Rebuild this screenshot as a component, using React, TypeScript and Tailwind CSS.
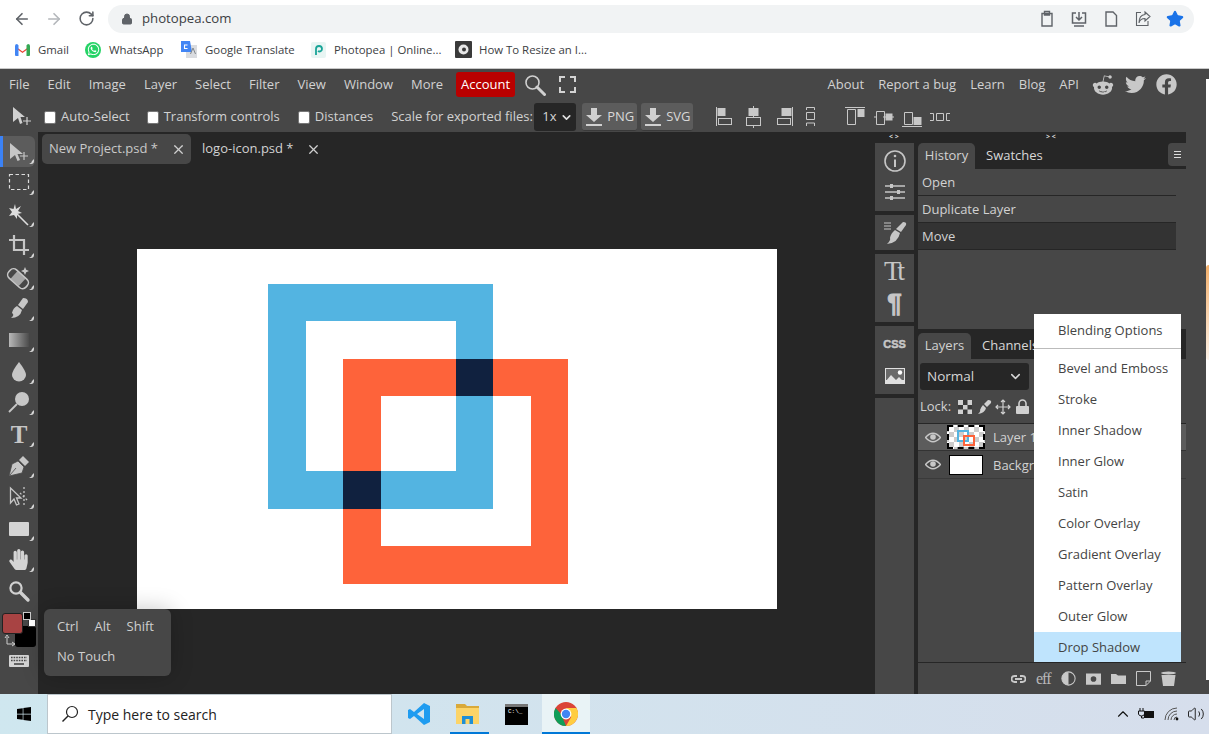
import React from "react";
import { ArrowLeft, ArrowRight, RotateCw, Lock, Star, X, ChevronDown, ChevronUp, Volume2 } from "lucide-react";
import { FaRedditAlien, FaTwitter, FaFacebook, FaWindows, FaHandPaper, FaWhatsapp } from "react-icons/fa";

const C = "#c6c6c6";

function Marker() {
  return <path d="M34 23 v2 q0 3 -3 3 h-2 q3 -1 3 -3 z" fill="#d8d8d8" />;
}

function Tool({ children, active, marker = true }: { children: React.ReactNode; active?: boolean; marker?: boolean }) {
  return (
    <div className={"h-[31.4px] w-[35px] " + (active ? "bg-[#5c5c5c] rounded-r-md border-l-[3px] border-[#3b82f6]" : "")}>
      <svg width="38" height="31" viewBox="0 0 38 31" className={active ? "-ml-[3px]" : ""}>
        {children}
        {marker && <Marker />}
      </svg>
    </div>
  );
}

function LeftTools() {
  return (
    <div className="w-[38px] bg-[#474747] pt-1 flex flex-col shrink-0">
      <Tool active>
        <path d="M10 7 L23 18 H17.5 L20 24 L17.5 25 L15 19 L10 23 Z" fill={C} />
        <path d="M24 16 V24 M20 20 H28" stroke={C} strokeWidth="1.2" />
      </Tool>
      <Tool>
        <rect x="9.5" y="7.5" width="19" height="15" fill="none" stroke="#ddd" strokeWidth="1.2" strokeDasharray="3.5 2.5" />
      </Tool>
      <Tool>
        <path d="M15 5 L16 10 L21 7 L18 12 L22 14 L17 15 L17 20 L14 16 L9 17 L12 13 L9 9 L13.5 10 Z" fill="#ddd" />
        <path d="M17 15 L28 26" stroke="#ddd" strokeWidth="1.6" />
      </Tool>
      <Tool>
        <path d="M14 5 V20 H29 M9 10 H24 V25" fill="none" stroke={C} strokeWidth="2.2" />
      </Tool>
      <Tool>
        <g transform="rotate(42 18 16)">
          <rect x="7" y="11" width="23" height="11" rx="4.5" fill="none" stroke={C} strokeWidth="1.6" />
          <rect x="13" y="11.5" width="11" height="10" fill={C} opacity="0.75" />
        </g>
        <path d="M25 5 l1.2 2.8 l2.8 1.2 l-2.8 1.2 l-1.2 2.8 l-1.2 -2.8 l-2.8 -1.2 l2.8 -1.2 z" fill={C} />
      </Tool>
      <Tool>
        <path d="M23 5 Q28 5 28 9 L23 16 L18 12 Z" fill={C} />
        <path d="M17 13 L22 17 Q20 25 11 25 Q15 22 12 20 Q13 15 17 13 Z" fill={C} />
      </Tool>
      <Tool>
        <defs>
          <linearGradient id="g1" x1="0" x2="1" y1="0" y2="0">
            <stop offset="0" stopColor="#b8b8b8" />
            <stop offset="1" stopColor="#4c4c4c" />
          </linearGradient>
        </defs>
        <rect x="9" y="9" width="20" height="14" fill="url(#g1)" />
      </Tool>
      <Tool>
        <path d="M19 6 Q26 15 26 19 A7 6.5 0 0 1 12 19 Q12 15 19 6 Z" fill={C} />
      </Tool>
      <Tool>
        <circle cx="22" cy="12" r="7" fill={C} />
        <path d="M17 17 L9 25" stroke={C} strokeWidth="1.8" />
      </Tool>
      <Tool>
        <text x="19" y="24" textAnchor="middle" fontFamily="'Liberation Serif', serif" fontWeight="700" fontSize="25" fill={C}>T</text>
      </Tool>
      <Tool>
        <path d="M23 6 L29 12 L25 16 L19 10 Z" fill={C} />
        <path d="M18 11 L24 17 L22 23 L9 26 L12 14 Z M10 25 L16 18" fill={C} stroke="#474747" strokeWidth="0.8" />
      </Tool>
      <Tool>
        <path d="M10.5 7 L21 17 H16.5 L19 23 L16.5 24 L14 18 L10.5 22 Z" fill="none" stroke={C} strokeWidth="1.3" />
        <path d="M24 6 L24 24 M20 12 L28 20" stroke={C} strokeWidth="1.3" strokeDasharray="2 2" />
      </Tool>
      <Tool>
        <rect x="9" y="9" width="20" height="14" rx="1" fill="#d4d4d4" />
      </Tool>
      <Tool>
        <foreignObject x="8" y="5" width="22" height="22">
          <FaHandPaper size={21} color="#d4d4d4" />
        </foreignObject>
      </Tool>
      <Tool marker={false}>
        <circle cx="16" cy="13" r="5.6" fill="none" stroke="#d0d0d0" strokeWidth="2.2" />
        <path d="M20.5 17.5 L28 25" stroke="#d0d0d0" strokeWidth="3.4" strokeLinecap="round" />
      </Tool>
      <div className="relative h-[44px] mt-[1px] w-[38px]">
        <div className="absolute left-[15px] top-[18px] w-[21px] h-[21px] bg-black rounded-[3px]" />
        <div className="absolute left-[28px] top-[11px] w-[8px] h-[8px] bg-white border border-[#333]" />
        <div className="absolute left-[23px] top-[4px] w-[8px] h-[8px] bg-black border border-[#ccc]" />
        <div className="absolute left-[2px] top-[5px] w-[21px] h-[21px] bg-[#a84343] border border-[#222] rounded-[3px]" />
        <svg className="absolute left-[4px] top-[26px]" width="12" height="13" viewBox="0 0 12 13">
          <path d="M3 3 V10 H10 M1 4 L3 1 L5 4 M8 8 L11 10 L8 12" fill="none" stroke="#ccc" strokeWidth="1" />
        </svg>
      </div>
      <div className="ml-[9px] mt-[3px]">
        <svg width="20" height="12" viewBox="0 0 20 12">
          <rect width="20" height="12" rx="1" fill="#d4d4d4" />
          <path d="M2 2.5 H18 M2 5.5 H18" stroke="#474747" strokeWidth="1.4" strokeDasharray="1.6 1" />
          <path d="M5 9 H15" stroke="#474747" strokeWidth="1.6" />
        </svg>
      </div>
    </div>
  );
}

function Tab({ label, active }: { label: string; active?: boolean }) {
  return (
    <div className={"h-[30px] flex items-center rounded-[5px] text-[13px] " + (active ? "bg-[#474747] text-[#c9c9c9] w-[149px] pl-[7px]" : "text-[#d2d2d2] w-[135px] pl-[11px]")}>
      <span className="whitespace-nowrap -mt-[1px]">{label}</span>
      <X size={15} className="ml-auto mr-[5px]" color="#cfcfcf" strokeWidth={2} />
    </div>
  );
}

function Canvas() {
  return (
    <div className="flex-1 bg-[#262626] flex flex-col min-w-0">
      <div className="flex pl-[4px] pt-[2px] h-[33px]">
        <Tab label="New Project.psd *" active />
        <Tab label="logo-icon.psd *" />
      </div>
      <div className="ml-[99px] mt-[84px] w-[640px] h-[360px] bg-white">
        <svg width="640" height="360" viewBox="0 0 640 360">
          <path fillRule="evenodd" d="M131 35 H356 V260 H131 Z M169 72 V222 H319 V72 Z" fill="#53b4e1" />
          <path fillRule="evenodd" d="M206 110 H431 V335 H206 Z M244 147 V297 H394 V147 Z" fill="#fe633a" />
          <rect x="319" y="110" width="37" height="37" fill="#10213f" />
          <rect x="206" y="222" width="38" height="38" fill="#10213f" />
        </svg>
      </div>
    </div>
  );
}

function SideGroup({ h, children, grow }: { h?: string; children?: React.ReactNode; grow?: boolean }) {
  return <div className={"w-[39px] bg-[#474747] flex flex-col items-center " + (grow ? "flex-1 " : "") + (h || "")}>{children}</div>;
}

function SideIcons() {
  return (
    <div className="w-[43px] shrink-0 bg-[#262626] flex flex-col gap-[4px] relative">
      <div className="h-[11px] -mb-[4px] pl-[14px] text-[7px] leading-[10px] font-bold text-[#ddd]">&lt; &gt;</div>
      <SideGroup h="h-[68px]">
        <svg width="24" height="24" viewBox="0 0 24 24" className="mt-[6px]">
          <circle cx="12" cy="12" r="10" fill="none" stroke={C} strokeWidth="1.6" />
          <path d="M12 10.5 V18" stroke={C} strokeWidth="2" />
          <circle cx="12" cy="7" r="1.3" fill={C} />
        </svg>
        <svg width="22" height="18" viewBox="0 0 22 18" className="mt-[10px]">
          <path d="M1 3 H21 M1 9 H21 M1 15 H21" stroke={C} strokeWidth="1.3" />
          <path d="M6 1 H9 V5 H6 Z M13 7 H16 V11 H13 Z M6 13 H9 V17 H6 Z" fill={C} />
        </svg>
      </SideGroup>
      <SideGroup h="h-[35px]">
        <svg width="24" height="24" viewBox="0 0 24 24" className="mt-[6px]">
          <path d="M1 2 H8 M1 5 H8 M1 8 H8" stroke={C} strokeWidth="1.1" />
          <path d="M20 1 Q24 1 23 4 L18 11 L13 8 Z" fill={C} />
          <path d="M12 9 L17 12 Q15 22 4 23 Q8 19 7 17 Q8 12 12 9 Z" fill={C} />
        </svg>
      </SideGroup>
      <SideGroup h="h-[68px]">
        <span className="text-[28px] leading-[30px] mt-[2px] font-['Liberation_Serif',serif] text-[#c6c6c6] tracking-[-4px] pr-[4px]">Tt</span>
        <span className="text-[26px] leading-[28px] mt-[3px] font-bold font-['Liberation_Sans',sans-serif] text-[#c6c6c6] [-webkit-text-stroke:1px_#c6c6c6]">¶</span>
      </SideGroup>
      <SideGroup h="h-[68px]">
        <span className="text-[11px] leading-[12px] mt-[12px] font-black font-['Liberation_Sans',sans-serif] text-[#c6c6c6] [-webkit-text-stroke:0.5px_#c6c6c6]">CSS</span>
        <svg width="20" height="16" viewBox="0 0 20 16" className="mt-[18px]">
          <rect width="20" height="16" fill="#e0e0e0" />
          <rect x="1" y="1" width="18" height="11" fill="#6a6a6a" />
          <path d="M1 15 V13 L6 7 L11 12 L14 9 L19 14 V15 Z" fill="#e0e0e0" />
          <circle cx="15" cy="4.5" r="2.2" fill="#fff" />
        </svg>
      </SideGroup>
      <SideGroup grow />
    </div>
  );
}

function HistoryRow({ label, active }: { label: string; active?: boolean }) {
  return (
    <div className={"h-[27px] w-[258px] border-b border-[#262626] pl-[4px] pt-[1px] flex items-center text-[13px] text-[#d2d2d2] " + (active ? "bg-[#333333]" : "")}>
      {label}
    </div>
  );
}

function Panels() {
  return (
    <div className="w-[291px] shrink-0 bg-[#474747] flex flex-col relative">
      <div className="h-[37px] w-[268px] bg-[#262626] relative flex items-end shrink-0">
        <div className="absolute left-[128px] top-0 text-[7px] leading-[10px] font-bold text-[#ddd]">&gt; &lt;</div>
        <div className="h-[26px] w-[57px] bg-[#474747] rounded-t-[5px] text-[13px] text-[#d2d2d2] flex items-center justify-center">History</div>
        <div className="h-[26px] pl-[11px] text-[13px] text-[#d8d8d8] flex items-center">Swatches</div>
        <div className="absolute right-0 top-[11px] w-[18px] h-[23px] bg-[#474747] rounded-l-[4px] flex flex-col justify-center items-center gap-[2px]">
          <div className="w-[7px] h-[1px] bg-[#ddd]" />
          <div className="w-[7px] h-[1px] bg-[#ddd]" />
          <div className="w-[7px] h-[1px] bg-[#ddd]" />
        </div>
      </div>
      <div className="h-[160px] shrink-0">
        <HistoryRow label="Open" />
        <HistoryRow label="Duplicate Layer" />
        <HistoryRow label="Move" active />
      </div>
      <div className="h-[30px] w-[268px] bg-[#262626] flex items-end shrink-0">
        <div className="h-[26px] w-[53px] bg-[#474747] rounded-t-[5px] text-[13px] text-[#d2d2d2] flex items-center justify-center">Layers</div>
        <div className="h-[26px] pl-[11px] text-[13px] text-[#d8d8d8] flex items-center">Channels</div>
      </div>
      <div className="pl-[2px] pt-[4px]">
        <div className="w-[109px] h-[27px] bg-[#262626] rounded-[3px] pl-[7px] pr-[6px] flex items-center justify-between text-[13.5px] text-[#d6d6d6]">
          Normal
          <ChevronDown size={15} strokeWidth={2.4} color="#d6d6d6" />
        </div>
      </div>
      <div className="h-[33px] flex items-center pl-[2px] text-[13px] text-[#d2d2d2] shrink-0">
        <span className="w-[38px]">Lock:</span>
        <svg width="72" height="16" viewBox="0 0 72 16">
          <rect x="0" y="1" width="14" height="14" fill="#d0d0d0" />
          <path d="M5 1 H9.5 V6 H5 Z M0 6 H5 V10.5 H0 Z M9.5 6 H14 V10.5 H9.5 Z M5 10.5 H9.5 V15 H5 Z" fill="#3a3a3a" />
          <path d="M30 1 Q34 1 33 4 L29 8 L26 5 Z M25 6 L28 9 Q27 14 20 15 Q23 12 22 11 Q23 8 25 6 Z" fill="#d0d0d0" />
          <path d="M45 1 V15 M38 8 H52 M43 3 L45 1 L47 3 M43 13 L45 15 L47 13 M40 6 L38 8 L40 10 M50 6 L52 8 L50 10" fill="none" stroke="#d0d0d0" strokeWidth="1.2" />
          <rect x="58" y="7" width="13" height="8" rx="1" fill="#d0d0d0" />
          <path d="M61 7 V4.5 A3.5 3.5 0 0 1 68 4.5 V7" fill="none" stroke="#d0d0d0" strokeWidth="1.6" />
        </svg>
      </div>
      <div className="border-t border-[#262626] w-[268px] shrink-0">
        <div className="h-[27px] bg-[#5c5c5c] flex items-center border-b border-[#333]">
          <Eye />
          <div className="ml-[6px] w-[38px] h-[24px] bg-white border-2 border-dashed border-black relative overflow-hidden [background-image:repeating-conic-gradient(#ccc_0_25%,#fff_0_50%)] [background-size:10px_10px]">
            <div className="absolute left-[8px] top-[3px] w-[12px] h-[12px] border-2 border-[#53b4e1]" />
            <div className="absolute left-[14px] top-[8px] w-[12px] h-[11px] border-2 border-[#fe633a]" />
          </div>
          <span className="ml-[8px] mt-[2px] text-[13px] text-[#d2d2d2]">Layer 1</span>
        </div>
        <div className="h-[28px] flex items-center border-b border-[#3a3a3a]">
          <Eye />
          <div className="ml-[8px] w-[34px] h-[20px] bg-white border border-black" />
          <span className="ml-[10px] mt-[2px] text-[13px] text-[#d2d2d2]">Background</span>
        </div>
      </div>
      <div className="flex-1" />
      <div className="h-[32px] w-[268px] border-t border-[#262626] shrink-0 flex items-center pl-[93px] gap-[10px]">
        <svg width="15" height="10" viewBox="0 0 15 10" className="shrink-0"><path d="M6 2 H3.5 A3 3 0 0 0 3.5 8 H6 M9 2 H11.5 A3 3 0 0 1 11.5 8 H9 M4 5 H11" fill="none" stroke="#c8c8c8" strokeWidth="1.8" /></svg>
        <span className="text-[16px] leading-[16px] text-[#b8b8b8] font-['Liberation_Serif',serif] w-[15px] tracking-[-1px] shrink-0">eff</span>
        <svg width="15" height="17" viewBox="0 0 17 17" className="shrink-0 w-[15px]"><circle cx="8.5" cy="8.5" r="7.5" fill="none" stroke="#c8c8c8" strokeWidth="1.2" /><path d="M8.5 1 A7.5 7.5 0 0 0 8.5 16 Z" fill="#c8c8c8" /></svg>
        <svg width="15" height="12" viewBox="0 0 16 12" className="shrink-0"><path fillRule="evenodd" d="M0 0 H16 V12 H0 Z M8 3 A3 3 0 1 0 8 9 A3 3 0 0 0 8 3 Z" fill="#c8c8c8" /></svg>
        <svg width="15" height="11" viewBox="0 0 15 11" className="shrink-0"><path d="M0 1 H5 L7 2.5 H15 V11 H0 Z" fill="#c8c8c8" /></svg>
        <svg width="15" height="15" viewBox="0 0 15 15" className="shrink-0"><path d="M0.5 0.5 H14.5 V10 L10 14.5 H0.5 Z M14.5 10 H10 V14.5" fill="none" stroke="#c8c8c8" strokeWidth="1" /></svg>
        <svg width="15" height="15" viewBox="0 0 15 15" className="shrink-0"><ellipse cx="7.5" cy="2" rx="7.5" ry="1.5" fill="#c8c8c8" /><path d="M0.5 4 H14.5 L13 15 H2 Z" fill="#c8c8c8" /></svg>
      </div>
    </div>
  );
}

function Eye() {
  return (
    <svg width="16" height="11" viewBox="0 0 16 11" className="ml-[7px] shrink-0">
      <path d="M0.5 5.5 Q8 -3 15.5 5.5 Q8 14 0.5 5.5 Z" fill="none" stroke="#c8c8c8" strokeWidth="1.4" />
      <circle cx="8" cy="5" r="2.8" fill="#c8c8c8" />
    </svg>
  );
}

function LayerStyleMenu() {
  const items = ["Bevel and Emboss", "Stroke", "Inner Shadow", "Inner Glow", "Satin", "Color Overlay", "Gradient Overlay", "Pattern Overlay", "Outer Glow"];
  return (
    <div className="absolute left-[1034px] top-[314px] w-[147px] h-[348px] overflow-hidden bg-white text-[13px] text-[#444] flex flex-col">
      <div className="h-[35px] shrink-0 pl-[24px] pb-[1px] flex items-center border-b border-[#bbb]">Blending Options</div>
      <div className="h-[4px] shrink-0" />
      {items.map((t) => (
        <div key={t} className="h-[31px] shrink-0 pl-[24px] flex items-center whitespace-nowrap">{t}</div>
      ))}
      <div className="h-[31px] shrink-0 pl-[24px] flex items-center bg-[#bfe4fd]">Drop Shadow</div>
    </div>
  );
}

function AlignIcons() {
  const s = "#c8c8c8";
  return (
    <svg width="235" height="26" viewBox="0 0 235 26" className="shrink-0">
      <g fill="none" stroke={s} strokeWidth="1">
        <path d="M0.5 3 V22" />
        <rect x="2" y="4.5" width="7" height="7" fill={s} />
        <rect x="2.5" y="14.5" width="13" height="6" />
        <path d="M37.5 2 V24" />
        <rect x="33" y="4.5" width="9" height="7" fill={s} />
        <rect x="30.5" y="13.5" width="14" height="8" fill="#474747" />
        <path d="M76.5 3 V22" />
        <rect x="66" y="4.5" width="9" height="7" fill={s} />
        <rect x="61.5" y="14.5" width="13" height="6" />
        <path d="M90.5 6 V3.5 H98.5 V6 M90.5 8.5 H98.5 V15.5 H90.5 Z M90.5 22 V19 H98.5 V22" />
        <path d="M129 3.5 H149 M131.5 5.5 H139.5 V20.5 H131.5 Z" />
        <rect x="142" y="5.5" width="6" height="7" fill={s} />
        <path d="M158 13 H161 M167 13 H170 M160.5 7.5 H168.5 V20.5 H160.5 Z" />
        <rect x="170" y="10" width="6" height="6" fill={s} />
        <path d="M176 13 H178" />
        <path d="M186 22.5 H206 M188.5 8.5 H196.5 V20.5 H188.5 Z" />
        <rect x="198" y="13.5" width="7" height="7" fill={s} />
        <path d="M214 9.5 H217.5 V16.5 H214 M220.5 9.5 H227.5 V16.5 H220.5 Z M234 9.5 H230.5 V16.5 H234" />
      </g>
    </svg>
  );
}

function ExportButton({ label }: { label: string }) {
  return (
    <div className="h-[28px] bg-[#5c5c5c] rounded-[3px] border-b border-[#3a3a3a] flex items-center pl-[3px] pr-[2px] gap-[4px] text-[13px] text-[#d8d8d8]">
      <svg width="18" height="20" viewBox="0 0 18 20">
        <path d="M6 1 H12 V8 H17 L9 15 L1 8 H6 Z" fill="#d0d0d0" />
        <rect x="1" y="17" width="16" height="2" fill="#d0d0d0" />
      </svg>
      {label}
    </div>
  );
}

function Check({ label, ml }: { label: string; ml: string }) {
  return (
    <label className={"flex items-center gap-[5px] " + ml}>
      <span className="w-[12px] h-[13px] bg-white rounded-[2px] border border-[#777]" />
      {label}
    </label>
  );
}

function Menus() {
  const left = ["File", "Edit", "Image", "Layer", "Select", "Filter", "View", "Window", "More"];
  const right = ["About", "Report a bug", "Learn", "Blog", "API"];
  return (
    <div className="bg-[#474747] text-[13px] text-[#d2d2d2] shrink-0">
      <div className="h-[31px] flex items-center pl-[9px] pr-[32px]">
        <div className="flex gap-[18px]">
          {left.map((t) => <span key={t}>{t}</span>)}
        </div>
        <div className="ml-[13px] h-[25px] w-[59px] bg-[#b90000] rounded-[3px] text-white flex items-center justify-center">Account</div>
        <svg width="22" height="22" viewBox="0 0 22 22" className="ml-[9px]">
          <circle cx="8.5" cy="8.5" r="6.5" fill="none" stroke="#d0d0d0" strokeWidth="1.6" />
          <path d="M13 13 L20.5 20.5" stroke="#d0d0d0" strokeWidth="3" strokeLinecap="round" />
        </svg>
        <svg width="17" height="17" viewBox="0 0 17 17" className="ml-[13px]">
          <path d="M1 6 V1 H6 M11 1 H16 V6 M16 11 V16 H11 M6 16 H1 V11" fill="none" stroke="#d4d4d4" strokeWidth="2" />
        </svg>
        <div className="ml-auto flex items-center gap-[14px]">
          {right.map((t) => <span key={t} className="whitespace-nowrap">{t}</span>)}
        </div>
        <FaRedditAlien size={22} color="#c8c8c8" className="ml-[13px]" />
        <FaTwitter size={21} color="#c8c8c8" className="ml-[11px]" />
        <FaFacebook size={21} color="#c8c8c8" className="ml-[10px]" />
      </div>
      <div className="h-[32px] pt-[2px] flex items-center">
        <svg width="22" height="22" viewBox="0 0 22 22" className="ml-[12px] shrink-0">
          <path d="M1 1 L13 11 H8.5 L10.5 17 L8 18 L6 12 L1 16 Z" fill="#d0d0d0" />
          <path d="M15 11 V19 M11 15 H19" stroke="#d0d0d0" strokeWidth="1.2" />
        </svg>
        <Check label="Auto-Select" ml="ml-[10px]" />
        <Check label="Transform controls" ml="ml-[17px]" />
        <Check label="Distances" ml="ml-[18px]" />
        <span className="ml-[18px] whitespace-nowrap w-[143px]">Scale for exported files:</span>
        <div className="w-[42px] h-[28px] bg-[#262626] rounded-[3px] pl-[8px] pr-[3px] flex items-center justify-between text-[#d6d6d6]">
          1x <ChevronDown size={13} strokeWidth={3} color="#e0e0e0" />
        </div>
        <div className="ml-[6px] w-[55px] shrink-0"><ExportButton label="PNG" /></div>
        <div className="ml-[4px] w-[52px] shrink-0"><ExportButton label="SVG" /></div>
        <div className="ml-[23px]"><AlignIcons /></div>
      </div>
    </div>
  );
}

function Browser() {
  return (
    <div className="bg-white shrink-0 border-b border-[#c8c8c8] h-[69px]">
      <div className="h-[36px] flex items-center pt-[1px]">
        <ArrowLeft size={18} color="#5f6368" strokeWidth={2.2} className="ml-[13px]" />
        <ArrowRight size={18} color="#b4b7bb" strokeWidth={2.2} className="ml-[14px]" />
        <RotateCw size={17} color="#5f6368" strokeWidth={2.2} className="ml-[15px]" />
        <div className="ml-[13px] w-[1086px] h-[28px] rounded-full bg-[#f1f3f4] flex items-center pl-[13px]">
          <Lock size={12} color="#5f6368" fill="#5f6368" />
          <span className="ml-[9px] text-[13.2px] text-[#3c4043]">photopea.com</span>
          <div className="ml-auto mr-[10px] flex items-center gap-[14px]">
            <svg width="18" height="18" viewBox="0 0 18 18"><path d="M4 3.5 H14 V16 H4 Z M6.5 1.5 H11.5 V5 H6.5 Z" fill="none" stroke="#5f6368" strokeWidth="1.4" /></svg>
            <svg width="18" height="18" viewBox="0 0 18 18"><path d="M6 3 H2.5 V13 H15.5 V3 H12 M9 2 V10 M6 7 L9 10 L12 7 M4 16 H14" fill="none" stroke="#5f6368" strokeWidth="1.5" /></svg>
            <svg width="18" height="18" viewBox="0 0 18 18"><path d="M4 2 H11 L14.5 5.5 V16 H4 Z" fill="none" stroke="#5f6368" strokeWidth="1.4" /></svg>
            <svg width="18" height="18" viewBox="0 0 18 18"><path d="M7 2.5 H2.5 V15.5 H14 V11 M11 2 L16 6.5 L11 11 V8.5 Q6 8.5 5 13 Q5 5 11 4.5 Z" fill="none" stroke="#5f6368" strokeWidth="1.1" /></svg>
            <Star size={18} color="#1a73e8" fill="#1a73e8" />
          </div>
        </div>
      </div>
      <div className="h-[32px] flex items-center text-[11.4px] text-[#3c4043] pl-[15px] pb-[4px]">
        <div className="w-[70px] shrink-0 flex items-center">
          <svg width="15" height="12" viewBox="0 0 15 12">
            <path d="M0 2 L7.5 7.5 L15 2 V3.5 L7.5 9 L0 3.5 Z" fill="#ea4335" />
            <path d="M0 2 Q0 0 2 0 L3.5 1.2 V12 H1 Q0 12 0 11 Z" fill="#4285f4" />
            <path d="M15 2 Q15 0 13 0 L11.5 1.2 V12 H14 Q15 12 15 11 Z" fill="#34a853" />
          </svg>
          <span className="ml-[8px]">Gmail</span>
        </div>
        <div className="w-[96px] shrink-0 flex items-center">
          <span className="w-[16px] h-[16px] rounded-full bg-[#25d366] flex items-center justify-center"><FaWhatsapp size={13} color="#fff" /></span>
          <span className="ml-[8px]">WhatsApp</span>
        </div>
        <div className="w-[130px] shrink-0 flex items-center">
          <svg width="16" height="17" viewBox="0 0 16 17">
            <rect x="5" y="4" width="11" height="13" fill="#dadce0" />
            <path d="M0 0 H9 L11 11 H0 Z" fill="#4285f4" />
            <path d="M12 7 L14.5 13 M9.5 13 L12 7" stroke="#80868b" strokeWidth="1" />
            <path d="M6.5 4 H3.5 V7.5 H6.5" fill="none" stroke="#fff" strokeWidth="1.1" />
          </svg>
          <span className="ml-[8px] whitespace-nowrap">Google Translate</span>
        </div>
        <div className="w-[144px] shrink-0 flex items-center">
          <svg width="15" height="16" viewBox="0 0 15 16">
            <rect width="15" height="16" rx="2" fill="#e8f5f3" />
            <path d="M5 13 V7 A3 3 0 0 1 11 7 A2.5 2.5 0 0 1 7 9" fill="none" stroke="#18a497" strokeWidth="1.8" />
          </svg>
          <span className="ml-[8px] whitespace-nowrap">Photopea | Online...</span>
        </div>
        <div className="flex items-center">
          <svg width="17" height="17" viewBox="0 0 17 17">
            <rect width="17" height="17" rx="1" fill="#3a3a3a" />
            <circle cx="8.5" cy="8.5" r="5" fill="#e8e8e8" />
            <circle cx="9" cy="8.5" r="2" fill="#3a3a3a" />
          </svg>
          <span className="ml-[7px] whitespace-nowrap">How To Resize an I...</span>
        </div>
      </div>
    </div>
  );
}

function Taskbar() {
  return (
    <div className="h-[40px] shrink-0 flex bg-gradient-to-r from-[#cfe7ef] to-[#d6deec] relative">
      <div className="w-[47px] flex items-center justify-center"><FaWindows size={16} color="#000" /></div>
      <div className="w-[345px] bg-white border border-[#bcc6cc] flex items-center pl-[13px] text-[14px] text-[#222]">
        <svg width="18" height="18" viewBox="0 0 18 18">
          <circle cx="11" cy="7" r="5.5" fill="none" stroke="#222" strokeWidth="1.2" />
          <path d="M7 11 L1.5 16.5" stroke="#222" strokeWidth="1.4" />
        </svg>
        <span className="ml-[9px]">Type here to search</span>
      </div>
      <div className="w-[51px] flex items-center justify-center ml-[1px]">
        <svg width="24" height="24" viewBox="0 0 24 24">
          <path d="M17 1 L23 4 V20 L17 23 L7 14 L3 17 L1 16 V8 L3 7 L7 10 Z M17 7 L10 12 L17 17 Z" fill="#1f9cf0" fillRule="evenodd" />
        </svg>
      </div>
      <div className="w-[47px] flex items-center justify-center relative">
        <svg width="23" height="20" viewBox="0 0 23 20">
          <path d="M0 0 H9 L11 2 H23 V5 H0 Z" fill="#d9a93a" />
          <rect y="4" width="23" height="16" fill="#fcd468" />
          <path d="M6 20 V12 H17 V20 H13.5 V15 H9.5 V20 Z" fill="#1f8fd6" />
        </svg>
        <div className="absolute bottom-0 left-[6px] w-[39px] h-[2px] bg-[#0078d7]" />
      </div>
      <div className="w-[51px] flex items-center justify-center">
        <div className="w-[23px] h-[21px] bg-black border-t-[3px] border-[#777] flex items-start pl-[3px] pt-[1px]">
          <span className="text-[6px] leading-[8px] text-white font-['Liberation_Mono',monospace]">C:\_</span>
        </div>
      </div>
      <div className="w-[48px] bg-[#e9f3f6] flex items-center justify-center relative">
        <svg width="24" height="24" viewBox="0 0 24 24">
          <circle cx="12" cy="12" r="12" fill="#db4437" />
          <path d="M12 24 A12 12 0 0 1 1.6 6 L7 12 L12 24 Z" fill="#0f9d58" />
          <path d="M12 6 H22.4 A12 12 0 0 1 12 24 L17.2 15 Z" fill="#ffcd40" />
          <circle cx="12" cy="12" r="5.4" fill="#fff" />
          <circle cx="12" cy="12" r="4.2" fill="#4285f4" />
        </svg>
        <div className="absolute bottom-0 left-0 w-full h-[2px] bg-[#0078d7]" />
      </div>
      <div className="ml-auto flex items-center pr-[4px] gap-[7px]">
        <ChevronUp size={18} color="#111" strokeWidth={1.5} />
        <svg width="17" height="12" viewBox="0 0 17 12" className="-ml-[2px]">
          <path d="M3 0 V3 M6 0 V3 M1.5 3 H7.5 V6 Q7 8 4.5 8 Q2 8 1.5 6 Z M4.5 8 V10 H7" fill="none" stroke="#111" strokeWidth="1" />
          <rect x="7" y="3" width="10" height="7" fill="#111" />
        </svg>
        <svg width="16" height="14" viewBox="0 0 16 14" className="ml-[3px]">
          <path d="M1 13 A12 12 0 0 1 13 1 M4 13 A9 9 0 0 1 13 4 M7 13 A6 6 0 0 1 13 7 M10 13 A3 3 0 0 1 13 10" fill="none" stroke="#555" strokeWidth="1" />
          <circle cx="13" cy="12" r="1.4" fill="#111" />
        </svg>
        <Volume2 size={18} color="#222" strokeWidth={1.3} />
      </div>
    </div>
  );
}

export default function App() {
  return (
    <div className="relative w-[1209px] h-[734px] overflow-hidden flex flex-col font-['Open_Sans',sans-serif] bg-white">
      <Browser />
      <Menus />
      <div className="flex-1 flex min-h-0 relative">
        <LeftTools />
        <Canvas />
        <SideIcons />
        <Panels />
        <div className="absolute right-0 top-[-53px] w-[3px] h-[601px] bg-white">
          <div className="mt-[186px] h-[95px] w-[3px] rounded-l-full bg-gradient-to-b from-[#f3b06b] to-[#fdf3e8]" />
        </div>
      </div>
      <Taskbar />
      <div className="absolute left-[44px] top-[609px] w-[127px] h-[67px] bg-[#474747] rounded-[6px] pl-[13px] text-[13px] text-[#cfcfcf] shadow-[0_0_22px_rgba(0,0,0,0.22)]">
        <div className="flex gap-[16px] mt-[8px] h-[20px] items-center">
          <span>Ctrl</span>
          <span>Alt</span>
          <span>Shift</span>
        </div>
        <div className="mt-[10px] h-[20px] flex items-center">No Touch</div>
      </div>
      <LayerStyleMenu />
    </div>
  );
}
